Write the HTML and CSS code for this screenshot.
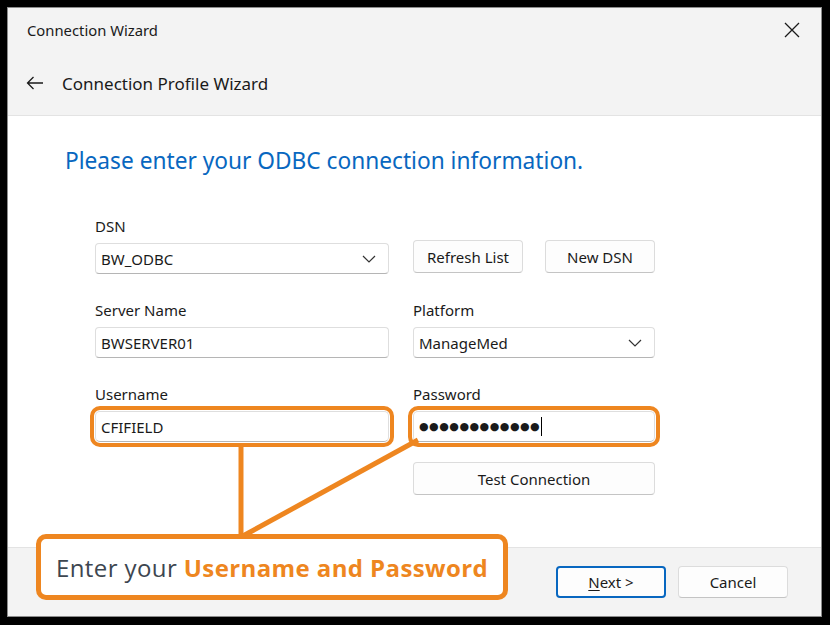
FILE: index.html
```html
<!DOCTYPE html>
<html lang="en">
<head>
    <meta charset="UTF-8">
    <title>Connection Wizard</title>
    <link rel="stylesheet" href="styles.css">
</head>
<body>
    <div class="window">
        <div class="titlebar">
            <span class="title">Connection Wizard</span>
            <button class="close-btn" aria-label="Close">
                <svg width="16" height="16" viewBox="0 0 16 16"><path d="M1 1 L15 15 M15 1 L1 15" stroke="#1a1a1a" stroke-width="1.3" fill="none"/></svg>
            </button>
        </div>
        <div class="nav">
            <svg class="back" width="18" height="14" viewBox="0 0 18 14"><path d="M17 7 H1.5 M7.5 1 L1.5 7 L7.5 13" stroke="#1a1a1a" stroke-width="1.3" fill="none"/></svg>
            <span class="nav-title">Connection Profile Wizard</span>
        </div>

        <div class="content">
            <h1>Please enter your ODBC connection information.</h1>

            <div class="form">
                <div class="field">
                    <label>DSN</label>
                    <div class="control select">
                        <span>BW_ODBC</span>
                        <svg width="14" height="8" viewBox="0 0 14 8"><path d="M1 1 L7 7 L13 1" stroke="#333" stroke-width="1.2" fill="none"/></svg>
                    </div>
                </div>
                <div class="btn-row">
                    <button class="btn">Refresh List</button>
                    <button class="btn">New DSN</button>
                </div>

                <div class="field">
                    <label>Server Name</label>
                    <div class="control">BWSERVER01</div>
                </div>
                <div class="field">
                    <label>Platform</label>
                    <div class="control select">
                        <span>ManageMed</span>
                        <svg width="14" height="8" viewBox="0 0 14 8"><path d="M1 1 L7 7 L13 1" stroke="#333" stroke-width="1.2" fill="none"/></svg>
                    </div>
                </div>

                <div class="field">
                    <label>Username</label>
                    <div class="control highlight">CFIFIELD</div>
                </div>
                <div class="field">
                    <label>Password</label>
                    <div class="control highlight pw"><span class="dots">●●●●●●●●●●●●</span><span class="caret"></span></div>
                </div>

                <div></div>
                <button class="btn test-btn">Test Connection</button>
            </div>
        </div>

        <div class="footer">
            <button class="btn primary"><u>N</u>ext &gt;</button>
            <button class="btn">Cancel</button>
        </div>

        <svg class="connectors" width="815" height="610" viewBox="0 0 815 610">
            <path d="M233 438 V530" stroke="#ee8620" stroke-width="5" fill="none"/>
            <path d="M410 432 L233 529" stroke="#ee8620" stroke-width="5" fill="none"/>
        </svg>
        <div class="callout">Enter your <strong>Username and Password</strong></div>
    </div>
</body>
</html>
```

FILE: styles.css
```css
* {
    margin: 0;
    padding: 0;
    box-sizing: border-box;
}

body {
    background: #000;
    padding: 7px;
    font-family: "Noto Sans", "Open Sans", sans-serif;
    font-size: 15px;
    color: #1a1a1a;
}

.window {
    position: relative;
    width: 815px;
    height: 610px;
    border: 1px solid #8c8c8c;
    background: #f3f3f3;
    display: flex;
    flex-direction: column;
}

.titlebar {
    height: 43px;
    display: flex;
    align-items: center;
    justify-content: space-between;
    padding: 0 21px 0 19px;
}

.title {
    font-size: 14.8px;
}

.close-btn {
    background: none;
    border: none;
    display: flex;
}

.nav {
    height: 65px;
    display: flex;
    align-items: center;
    padding-left: 18px;
    border-bottom: 1px solid #e3e3e3;
}

.back {
    margin-right: 18px;
}

.nav-title {
    font-size: 17px;
    color: #1a1a1a;
}

.content {
    height: 431px;
    background: #fff;
    padding: 30px 0 0 57px;
}

.content h1 {
    font-size: 22.7px;
    font-weight: 400;
    line-height: 30px;
    color: #0867c0;
}

.form {
    display: grid;
    grid-template-columns: 294px 242px;
    column-gap: 24px;
    row-gap: 26px;
    margin: 40px 0 0 30px;
}

.field label {
    display: block;
    line-height: 20px;
    margin-bottom: 7px;
}

.control {
    height: 31px;
    border: 1px solid #dedede;
    border-bottom-color: #b5b5b5;
    border-radius: 4px;
    background: #fff;
    display: flex;
    align-items: center;
    padding: 0 5px;
}

.select {
    justify-content: space-between;
    padding-right: 12px;
}

.highlight {
    outline: 4px solid #ee8620;
    outline-offset: 1px;
    border-radius: 5px;
}

.pw .dots {
    font-family: "DejaVu Sans", sans-serif;
    font-size: 11px;
    letter-spacing: 0.5px;
}

.caret {
    display: inline-block;
    width: 1px;
    height: 19px;
    background: #000;
    margin-left: 1px;
}

.btn-row {
    display: flex;
    gap: 22px;
    align-self: end;
    padding-bottom: 1px;
}

.btn {
    width: 110px;
    height: 33px;
    background: #fdfdfd;
    border: 1px solid #dcdcdc;
    border-bottom-color: #c4c4c4;
    border-radius: 4px;
    font-family: inherit;
    font-size: 15px;
    color: #1a1a1a;
}

.test-btn {
    width: 242px;
    margin-top: -6px;
}

.footer {
    flex: 1;
    border-top: 1px solid #e3e3e3;
    display: flex;
    justify-content: flex-end;
    align-items: center;
    gap: 12px;
    padding: 0 33px 0 0;
}

.footer .btn {
    height: 32px;
}

.btn.primary {
    border: 2px solid #0867c0;
}

.btn u {
    text-underline-offset: 2px;
}

.connectors {
    position: absolute;
    top: 0;
    left: 0;
    pointer-events: none;
}

.callout {
    position: absolute;
    left: 28px;
    top: 526px;
    width: 472px;
    height: 66px;
    background: #fff;
    border: 5px solid #ee8620;
    border-radius: 10px;
    padding-left: 15px;
    display: flex;
    align-items: center;
    font-family: "Open Sans", sans-serif;
    font-size: 24px;
    letter-spacing: 0.4px;
    color: #3d4650;
    white-space: pre;
}

.callout strong {
    color: #ee8620;
    font-weight: 700;
}
```
